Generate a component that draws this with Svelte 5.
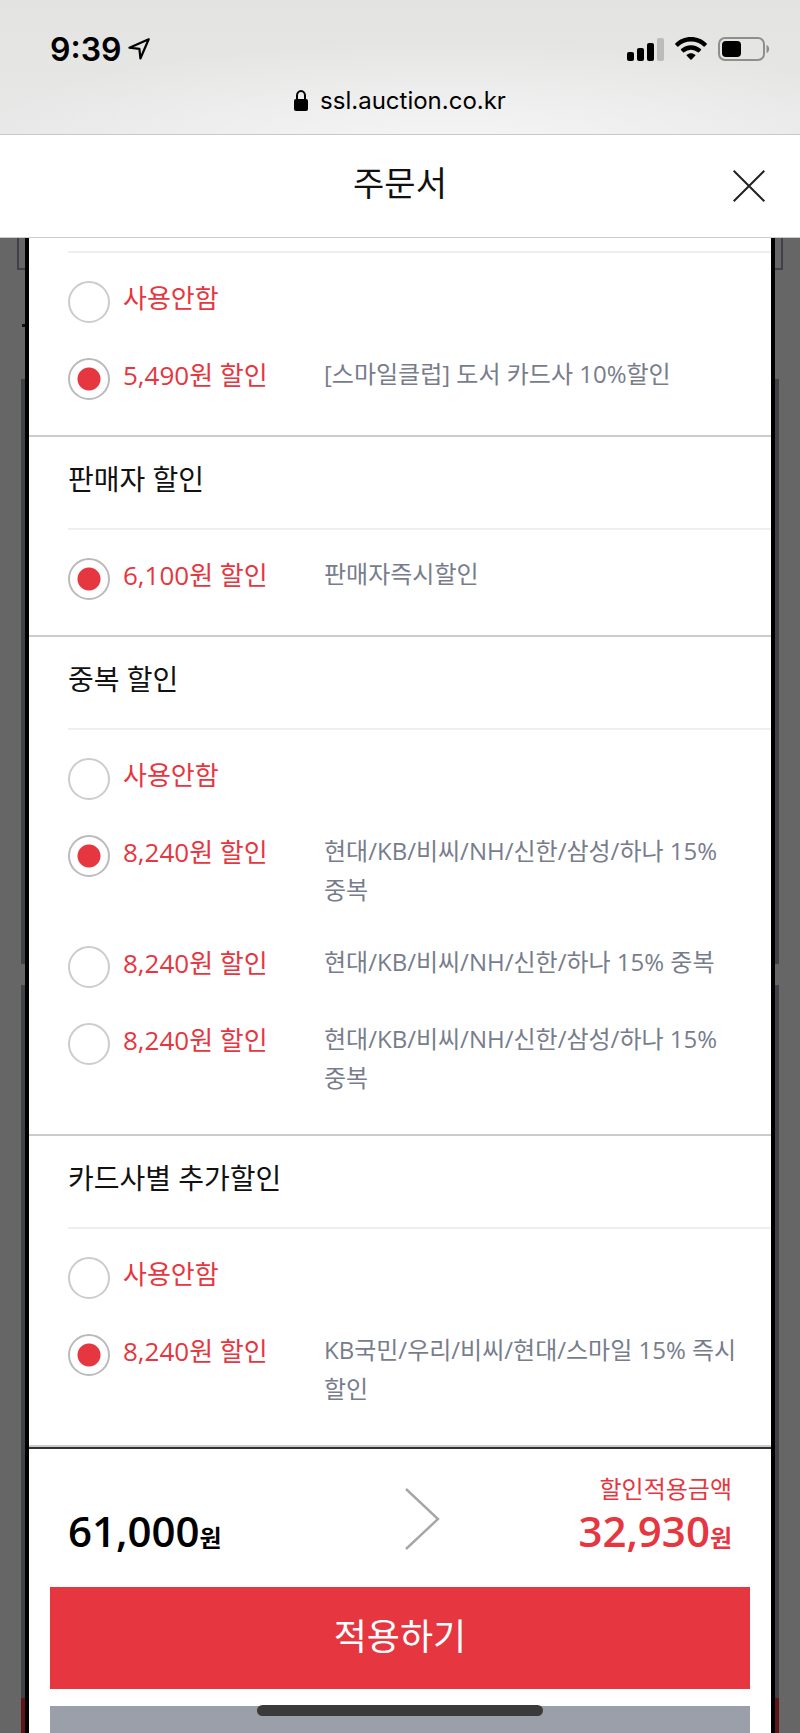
<script lang="ts">
	type Option = { amount: string; note?: string };
	type Group = { id: string; title?: string; selected: number; options: Option[] };

	let groups = $state<Group[]>([
		{
			id: 'club',
			selected: 1,
			options: [
				{ amount: '사용안함' },
				{ amount: '5,490원 할인', note: '[스마일클럽] 도서 카드사 10%할인' }
			]
		},
		{
			id: 'seller',
			title: '판매자 할인',
			selected: 0,
			options: [{ amount: '6,100원 할인', note: '판매자즉시할인' }]
		},
		{
			id: 'overlap',
			title: '중복 할인',
			selected: 1,
			options: [
				{ amount: '사용안함' },
				{ amount: '8,240원 할인', note: '현대/KB/비씨/NH/신한/삼성/하나 15% 중복' },
				{ amount: '8,240원 할인', note: '현대/KB/비씨/NH/신한/하나 15% 중복' },
				{ amount: '8,240원 할인', note: '현대/KB/비씨/NH/신한/삼성/하나 15% 중복' }
			]
		},
		{
			id: 'card',
			title: '카드사별 추가할인',
			selected: 1,
			options: [
				{ amount: '사용안함' },
				{ amount: '8,240원 할인', note: 'KB국민/우리/비씨/현대/스마일 15% 즉시 할인' }
			]
		}
	]);
</script>

<div class="screen">
	<header class="browser">
		<div class="status">
			<div class="clock">
				<span>9:39</span>
				<svg width="22" height="22" viewBox="0 0 22 22" fill="none" aria-hidden="true">
					<path d="M20.700 1.300 1.500 9.700l9.900 1.100 1 9.700Z" stroke="#000" stroke-width="2.200" stroke-linejoin="round" />
				</svg>
			</div>
			<div class="signals" aria-hidden="true">
				<svg width="37" height="24" viewBox="0 0 37 24">
					<rect x="0" y="15" width="7" height="9" rx="2" />
					<rect x="10" y="11" width="7" height="13" rx="2" />
					<rect x="20" y="6" width="7" height="18" rx="2" />
					<rect x="30" y="1" width="7" height="23" rx="2" fill="#bcbcbb" />
				</svg>
				<svg width="32" height="24" viewBox="0 0 32 24">
					<path d="M16 0C9.900 0 4.300 2.400.3 6.400a.8.8 0 0 0 0 1.100l2 2a.8.8 0 0 0 1.100 0A18 18 0 0 1 16 4.500a18 18 0 0 1 12.600 5 .8.8 0 0 0 1.100 0l2-2a.8.8 0 0 0 0-1.100C27.700 2.400 22.100 0 16 0Z" />
					<path d="M16 8.200c-3.800 0-7.300 1.500-9.900 3.900a.8.8 0 0 0 0 1.200l2 2a.8.8 0 0 0 1.100 0 10 10 0 0 1 13.600 0 .8.8 0 0 0 1.100 0l2-2a.8.8 0 0 0 0-1.200A14.500 14.500 0 0 0 16 8.200Z" />
					<path d="M16 16.200c-1.600 0-3 .6-4.200 1.500a.7.7 0 0 0 0 1.100l3.600 3.700a.8.8 0 0 0 1.200 0l3.600-3.700a.7.7 0 0 0 0-1.100c-1.200-.9-2.600-1.500-4.200-1.500Z" />
				</svg>
				<svg width="52" height="24" viewBox="0 0 52 24">
					<rect x="1" y="1" width="45" height="22" rx="6" fill="none" stroke="#8e8e8d" stroke-width="2" />
					<rect x="4" y="4" width="19" height="16" rx="4" />
					<path d="M48.500 8c3.500 1 3.500 7 0 8Z" fill="#8e8e8d" />
				</svg>
			</div>
		</div>
		<div class="address">
			<svg width="14" height="21" viewBox="0 0 14 21" aria-hidden="true">
				<path d="M3 10V5.500a4 4.500 0 0 1 8 0V10" fill="none" stroke="#000" stroke-width="2" />
				<rect x="0" y="9" width="14" height="12" rx="2" />
			</svg>
			<span>ssl.auction.co.kr</span>
		</div>
	</header>

	<div class="titlebar">
		<h1>주문서</h1>
		<button class="close" type="button" aria-label="닫기">
			<svg width="32" height="32" viewBox="0 0 32 32" aria-hidden="true">
				<path d="M.7.7l30.600 30.600M31.300.7.7 31.300" stroke="#222" stroke-width="2" />
			</svg>
		</button>
	</div>

	<div class="page">
		<!-- edges of the order form left visible under the dim layer -->
		<div class="underlay" aria-hidden="true">
			<div class="box"></div>
			<div class="tick"></div>
			<div class="panel first"></div>
			<div class="panel second"></div>
			<div class="panel pay"></div>
		</div>

		<form class="sheet" onsubmit={(e) => e.preventDefault()}>
			{#each groups as group (group.id)}
				<section class="group" aria-label={group.title}>
					{#if group.title}
						<h2>{group.title}</h2>
					{/if}
					<div class="options">
						{#each group.options as option, i}
							<label class="option">
								<input type="radio" name={group.id} value={i} bind:group={group.selected} />
								<span class="amount">{option.amount}</span>
								{#if option.note}
									<span class="note">{option.note}</span>
								{/if}
							</label>
						{/each}
					</div>
				</section>
			{/each}

			<div class="total">
				<p class="price">61,000<small>원</small></p>
				<svg class="arrow" width="36" height="64" viewBox="0 0 36 64" fill="none" aria-hidden="true">
					<path d="M2 2l32 30L2 62" stroke="#a6a6a6" stroke-width="2.400" />
				</svg>
				<div class="result">
					<p class="caption">할인적용금액</p>
					<p class="price">32,930<small>원</small></p>
				</div>
			</div>

			<div class="actions">
				<button class="apply" type="submit">적용하기</button>
				<button class="cancel" type="button" aria-label="취소"></button>
			</div>
		</form>
	</div>

	<div class="home" aria-hidden="true"></div>
</div>

<style>
	:global(body) {
		background: #666;
	}

	.screen {
		position: relative;
		display: flex;
		flex-direction: column;
		height: 100vh;
		overflow: hidden;
		background: #666;
		color: #111;
		font-family: 'Open Sans', 'Noto Sans CJK KR', sans-serif;
	}

	h1,
	h2,
	p {
		margin: 0;
		font-weight: 400;
	}

	button {
		border: 0;
		padding: 0;
		font-family: inherit;
	}

	svg {
		display: block;
		flex: none;
	}

	.browser {
		flex: none;
		border-bottom: 1px solid #c8c8c8;
		background:
			radial-gradient(ellipse 60% 80% at 56% 110%, #f5f5f5, rgba(245, 245, 245, 0)),
			linear-gradient(#e3e3e1, #e8e8e8);
		padding: 28px 30px 18px 50px;
		color: #000;
		font-family: Inter, sans-serif;
	}

	.status,
	.clock,
	.signals,
	.address {
		display: flex;
		align-items: center;
	}

	.status {
		justify-content: space-between;
		height: 42px;
	}

	.clock {
		gap: 6px;
		font-size: 32px;
		font-weight: 600;
	}

	.signals {
		gap: 11px;
	}

	.address {
		justify-content: center;
		gap: 12px;
		height: 32px;
		margin-top: 14px;
		padding-right: 20px;
		font-size: 24px;
	}

	.titlebar {
		display: grid;
		grid-template-columns: 1fr auto 1fr;
		align-items: center;
		flex: none;
		height: 102px;
		border-bottom: 1px solid #ccc;
		background: #fff;
		padding: 0 35px;
	}

	h1 {
		grid-column: 2;
		padding-bottom: 6px;
		font-size: 34px;
		line-height: 48px;
	}

	.close {
		justify-self: end;
		background: none;
	}

	.page {
		position: relative;
		flex: 1;
		min-height: 0;
		padding: 0 25px;
	}

	.underlay > div {
		position: absolute;
		box-sizing: border-box;
		right: 21px;
		left: 21px;
		background: #414247;
	}

	.underlay > .box {
		top: 0;
		right: 17px;
		left: 17px;
		height: 32px;
		border: 2px solid #414247;
		border-top: 0;
		background: none;
	}

	.underlay > .tick {
		top: 86px;
		right: 50%;
		left: 22px;
		height: 3px;
		background: #111;
	}

	.underlay > .first {
		top: 141px;
		height: 585px;
	}

	.underlay > .second {
		top: 747px;
		height: 713px;
	}

	.underlay > .pay {
		top: 1460px;
		height: 80px;
		background: #5f1419;
	}

	.sheet {
		position: relative;
		border: solid #000;
		border-width: 0 4px;
		background: #fff;
	}

	.group {
		border-bottom: 2px solid #ccc;
		padding-left: 39px;
	}

	.group:first-child {
		padding-top: 13px;
	}

	h2 {
		padding-bottom: 7px;
		font-size: 28px;
		line-height: 84px;
	}

	.options {
		display: flex;
		flex-direction: column;
		gap: 31px;
		border-top: 2px solid #eee;
		padding: 24px 34px 35px 0;
	}

	.option {
		display: grid;
		grid-template-columns: 42px 188px 1fr;
		column-gap: 13px;
		align-items: start;
		line-height: 39px;
	}

	input {
		appearance: none;
		width: 42px;
		height: 42px;
		margin: 4px 0 0;
		border: 2px solid #ccc;
		border-radius: 50%;
		background: #fff;
	}

	input:checked {
		border-color: #bbb;
		background: radial-gradient(circle, #e63640 11px, #fff 12px);
	}

	.amount {
		padding-top: 2px;
		color: #e63640;
		font-size: 26px;
	}

	.note {
		padding-bottom: 2px;
		color: #777d8c;
		font-size: 24px;
		word-break: keep-all;
	}

	.total {
		display: grid;
		grid-template-columns: 1fr auto 1fr;
		align-items: end;
		border-top: 2px solid #333;
		padding: 24px 39px 23px;
	}

	.price {
		font-size: 42px;
		font-weight: 600;
		line-height: 52px;
	}

	.price small {
		font-size: 24px;
		font-weight: 700;
	}

	.total > .price {
		color: #000;
	}

	.arrow {
		align-self: center;
		margin-left: 44px;
	}

	.result {
		color: #e63640;
		text-align: right;
	}

	.caption {
		font-size: 24px;
		line-height: 32px;
	}

	.actions {
		display: flex;
		flex-direction: column;
		gap: 17px;
		padding: 0 21px;
	}

	.apply,
	.cancel {
		height: 102px;
		background: #e63640;
		padding-bottom: 8px;
		color: #fff;
		font-size: 36px;
	}

	.cancel {
		background: #9b9fa9;
	}

	.home {
		position: absolute;
		bottom: 17px;
		left: 50%;
		width: 286px;
		height: 11px;
		border-radius: 6px;
		background: #3a3a3a;
		transform: translateX(-50%);
	}
</style>
